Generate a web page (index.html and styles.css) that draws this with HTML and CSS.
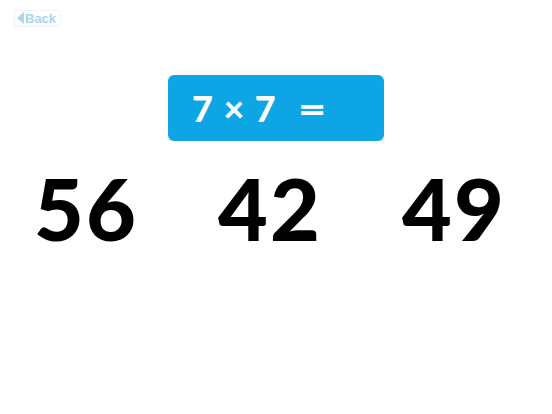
FILE: index.html
```html
<!DOCTYPE html>
<html>
<head>
<meta charset="utf-8">
<link rel="stylesheet" href="styles.css">
</head>
<body>
<div class="page">
  <div class="topbar">
    <button class="back"><span class="arrow"></span>Back</button>
  </div>
  <div class="question-wrap">
    <div class="question">7 × 7 <span class="eq">=</span></div>
  </div>
  <div class="answers">
    <div class="answer">56</div>
    <div class="answer">42</div>
    <div class="answer">49</div>
  </div>
</div>
</body>
</html>
```
FILE: styles.css
```css
html, body {
  margin: 0;
  padding: 0;
  background: #ffffff;
}
.page {
  width: 552px;
  height: 414px;
  font-family: "Lato", "Liberation Sans", sans-serif;
}
.topbar {
  padding: 10px 0 0 14px;
  height: 16px;
}
.back {
  display: flex;
  align-items: center;
  gap: 1px;
  height: 16px;
  padding: 0 4px 0 2px;
  border: 1px solid #eef5fa;
  border-radius: 3px;
  background: #ffffff;
  color: #a9d5ef;
  font-family: "Liberation Sans", sans-serif;
  font-weight: bold;
  font-size: 13px;
  box-shadow: 0 1px 2px rgba(0,0,0,0.05);
}
.arrow {
  width: 0;
  height: 0;
  border-top: 6px solid transparent;
  border-bottom: 6px solid transparent;
  border-right: 7px solid #a9d5ef;
}
.question-wrap {
  display: flex;
  justify-content: center;
  margin-top: 49px;
}
.question {
  width: 216px;
  height: 66px;
  box-sizing: border-box;
  background: #0ea5e5;
  border-radius: 6px;
  color: #ffffff;
  font-weight: 900;
  font-size: 36px;
  line-height: 66px;
  padding-left: 24px;
  word-spacing: 2px;
}
.eq {
  display: inline-block;
  margin-left: 12px;
  transform: scaleX(1.35);
  transform-origin: left center;
}
.answers {
  display: grid;
  grid-template-columns: 184px 184px 184px;
  margin-left: -6px;
  margin-top: 22px;
}
.answer {
  text-align: center;
  font-weight: 900;
  font-size: 86px;
  line-height: 90px;
  letter-spacing: 2px;
  color: #000000;
}
```
